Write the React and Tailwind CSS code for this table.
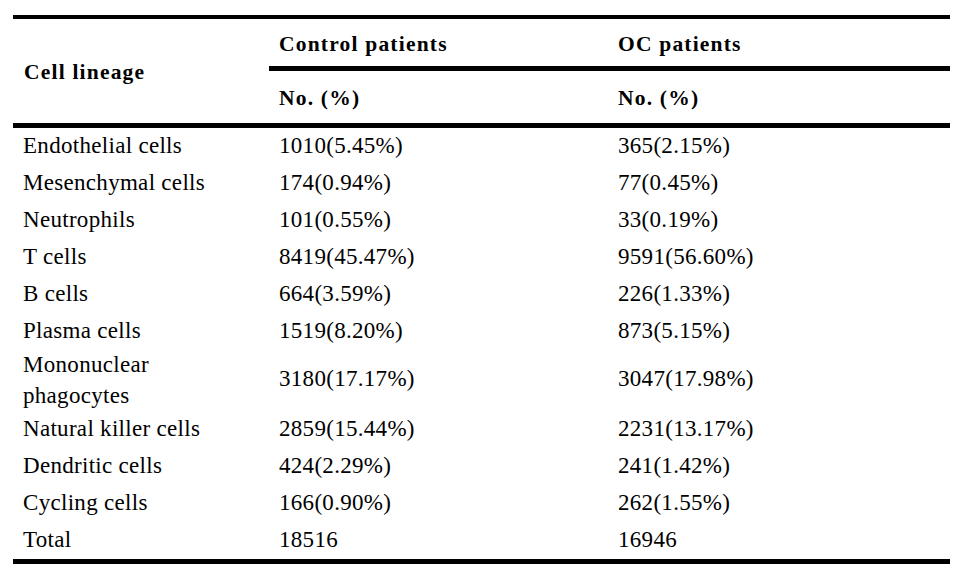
// Cell lineage table, three columns with booktabs-style rules

const rows = [
  ['Endothelial cells', '1010(5.45%)', '365(2.15%)'],
  ['Mesenchymal cells', '174(0.94%)', '77(0.45%)'],
  ['Neutrophils', '101(0.55%)', '33(0.19%)'],
  ['T cells', '8419(45.47%)', '9591(56.60%)'],
  ['B cells', '664(3.59%)', '226(1.33%)'],
  ['Plasma cells', '1519(8.20%)', '873(5.15%)'],
  ['Mononuclear phagocytes', '3180(17.17%)', '3047(17.98%)', true],
  ['Natural killer cells', '2859(15.44%)', '2231(13.17%)'],
  ['Dendritic cells', '424(2.29%)', '241(1.42%)'],
  ['Cycling cells', '166(0.90%)', '262(1.55%)'],
  ['Total', '18516', '16946'],
];

function BodyRow({ label, control, oc, tall }) {
  return (
    <div className={`flex items-center ${tall ? 'h-[61px] pb-[2px]' : 'h-[37px]'}`}>
      <div className={`w-[256px] pl-[10px] ${tall ? 'leading-[31px]' : ''}`}>
        {tall ? (
          <>
            <div>Mononuclear</div>
            <div>phagocytes</div>
          </>
        ) : (
          label
        )}
      </div>
      <div className="w-[339px] pl-[10px]">{control}</div>
      <div className="flex-1 pl-[10px]">{oc}</div>
    </div>
  );
}

export default function App() {
  return (
    <div className="bg-white w-[967px] h-[572px] pt-[15px] text-black">
      <div
        className="ml-[13px] w-[937px] border-t-4 border-b-[5px] border-black text-[23px] tracking-[0.3px]"
        style={{ fontFamily: '"Liberation Serif", "Times New Roman", serif' }}
      >
        <div className="flex font-bold text-[21.5px] tracking-[1.2px]">
          <div className="w-[256px] pl-[11px] flex items-center pt-[2px]">Cell lineage</div>
          <div className="flex-1 flex flex-col">
            <div className="h-[47px] flex items-center pt-[4px]">
              <div className="w-[339px] pl-[10px]">Control patients</div>
              <div className="flex-1 pl-[10px]">OC patients</div>
            </div>
            <div className="h-[50px] border-t-[5px] border-black flex items-center pt-[2px] box-content">
              <div className="w-[339px] pl-[10px]">No. (%)</div>
              <div className="flex-1 pl-[10px]">No. (%)</div>
            </div>
          </div>
        </div>
        <div className="border-t-[5px] border-black">
          {rows.map(([label, control, oc, tall]) => (
            <BodyRow key={label} label={label} control={control} oc={oc} tall={tall} />
          ))}
        </div>
      </div>
    </div>
  );
}
